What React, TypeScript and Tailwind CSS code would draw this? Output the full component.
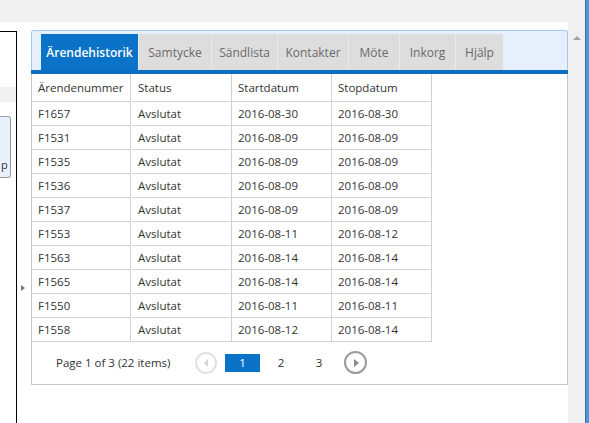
import React from 'react';

const tabs = [
  { label: 'Ärendehistorik', w: 'w-[97px]', active: true },
  { label: 'Samtycke', w: 'w-[73px]' },
  { label: 'Sändlista', w: 'w-[66px]' },
  { label: 'Kontakter', w: 'w-[71px]' },
  { label: 'Möte', w: 'w-[51px]' },
  { label: 'Inkorg', w: 'w-[56px]' },
  { label: 'Hjälp', w: 'w-[48px]' },
];

const rows = [
  ['F1657', 'Avslutat', '2016-08-30', '2016-08-30'],
  ['F1531', 'Avslutat', '2016-08-09', '2016-08-09'],
  ['F1535', 'Avslutat', '2016-08-09', '2016-08-09'],
  ['F1536', 'Avslutat', '2016-08-09', '2016-08-09'],
  ['F1537', 'Avslutat', '2016-08-09', '2016-08-09'],
  ['F1553', 'Avslutat', '2016-08-11', '2016-08-12'],
  ['F1563', 'Avslutat', '2016-08-14', '2016-08-14'],
  ['F1565', 'Avslutat', '2016-08-14', '2016-08-14'],
  ['F1550', 'Avslutat', '2016-08-11', '2016-08-11'],
  ['F1558', 'Avslutat', '2016-08-12', '2016-08-14'],
];

const headers = ['Ärendenummer', 'Status', 'Startdatum', 'Stopdatum'];

export default function App() {
  return (
    <div className="w-[589px] h-[423px] flex bg-white overflow-hidden font-['Open_Sans','Noto_Sans',sans-serif] text-[11.5px] text-[#333]">
      <div className="w-[568px] flex flex-col">
        <div className="h-[22px] bg-[#f0f0f0] shrink-0" />
        <div className="flex flex-1 pt-[8px]">
          {/* left side panel */}
          <div className="w-[17px] mt-[1px] border-t border-r border-black flex flex-col shrink-0">
            <div className="h-[15px] mt-[55px] bg-[#f0f0f0]" />
            <div className="w-[11px] h-[62px] mt-[14px] bg-[#e8f0fb] border border-l-0 border-[#9a9a9a] rounded-r-[3px] flex items-end">
              <span className="ml-[1px] mb-[7px] leading-none text-[11px] text-[#333]">p</span>
            </div>
          </div>

          {/* splitter */}
          <div className="w-[14px] shrink-0 pl-[4px] pt-[255px]">
            <div className="w-0 h-0 border-y-[3px] border-y-transparent border-l-[4px] border-l-[#777]" />
          </div>

          {/* main panel */}
          <div className="w-[537px] h-[355px] flex flex-col">
            <div className="h-[44px] border border-b-0 border-[#a6c7ee] rounded-t-[3px] bg-[#e5f0fc] flex flex-col">
              <div className="flex pl-[9px] pt-[3px] h-[39px]">
                {tabs.map((t) =>
                  t.active ? (
                    <div key={t.label} className={`${t.w} h-[36px] bg-[#0a72c7] text-white font-semibold text-[12px] flex items-center justify-center pt-px`}>
                      {t.label}
                    </div>
                  ) : (
                    <div key={t.label} className={`${t.w} h-[36px] bg-[#dddddd] border-l border-[#ebebeb] text-[#6a6a6a] text-[12px] flex items-center justify-center pt-px`}>
                      {t.label}
                    </div>
                  )
                )}
              </div>
              <div className="h-[4px] bg-[#0a6fc2] -mx-px" />
            </div>

            <div className="flex-1 border border-t-0 border-[#c6c6c6] flex flex-col">
              <div className="grid grid-cols-[100px_100px_100px_100px] w-[400px]">
                {headers.map((h, i) => (
                  <div key={h} className={`h-[28px] flex items-center border-b border-r border-[#d2d2d2] pl-[6px] ${i === 0 ? 'w-[99px]' : ''}`}>
                    {h}
                  </div>
                ))}
                {rows.map((r) =>
                  r.map((c, i) => (
                    <div key={r[0] + i} className={`h-[24px] flex items-center border-b border-r border-[#d2d2d2] pl-[6px] ${i === 0 ? 'w-[99px]' : ''}`}>
                      {c}
                    </div>
                  ))
                )}
              </div>

              {/* pager */}
              <div className="flex items-center h-[41px] pl-[24px]">
                <div className="w-[139px]">Page 1 of 3 (22 items)</div>
                <div className="w-[22px] h-[22px] rounded-full border-2 border-[#e2e2e2] flex items-center justify-center">
                  <div className="w-0 h-0 border-y-[4px] border-y-transparent border-r-[4px] border-r-[#d4d4d4] mr-[1px]" />
                </div>
                <div className="ml-[8px] w-[35px] h-[18px] bg-[#0a72c7] text-white flex items-center justify-center">1</div>
                <div className="ml-[2px] w-[38px] text-center">2</div>
                <div className="w-[38px] text-center">3</div>
                <div className="ml-[6px] w-[23px] h-[23px] rounded-full border-2 border-[#9a9a9a] flex items-center justify-center">
                  <div className="w-0 h-0 border-y-[4px] border-y-transparent border-l-[5px] border-l-[#8a8a8a] ml-[1px]" />
                </div>
              </div>
            </div>
          </div>
        </div>
      </div>

      {/* scrollbar */}
      <div className="w-[17px] bg-[#f0f0f0] flex justify-center pt-[36px]">
        <div className="w-0 h-0 border-x-[4px] border-x-transparent border-b-[4px] border-b-[#a3a3a3]" />
      </div>
      <div className="w-[4px] bg-[#4a98d4] border-l border-[#2f6e9e]" />
    </div>
  );
}
